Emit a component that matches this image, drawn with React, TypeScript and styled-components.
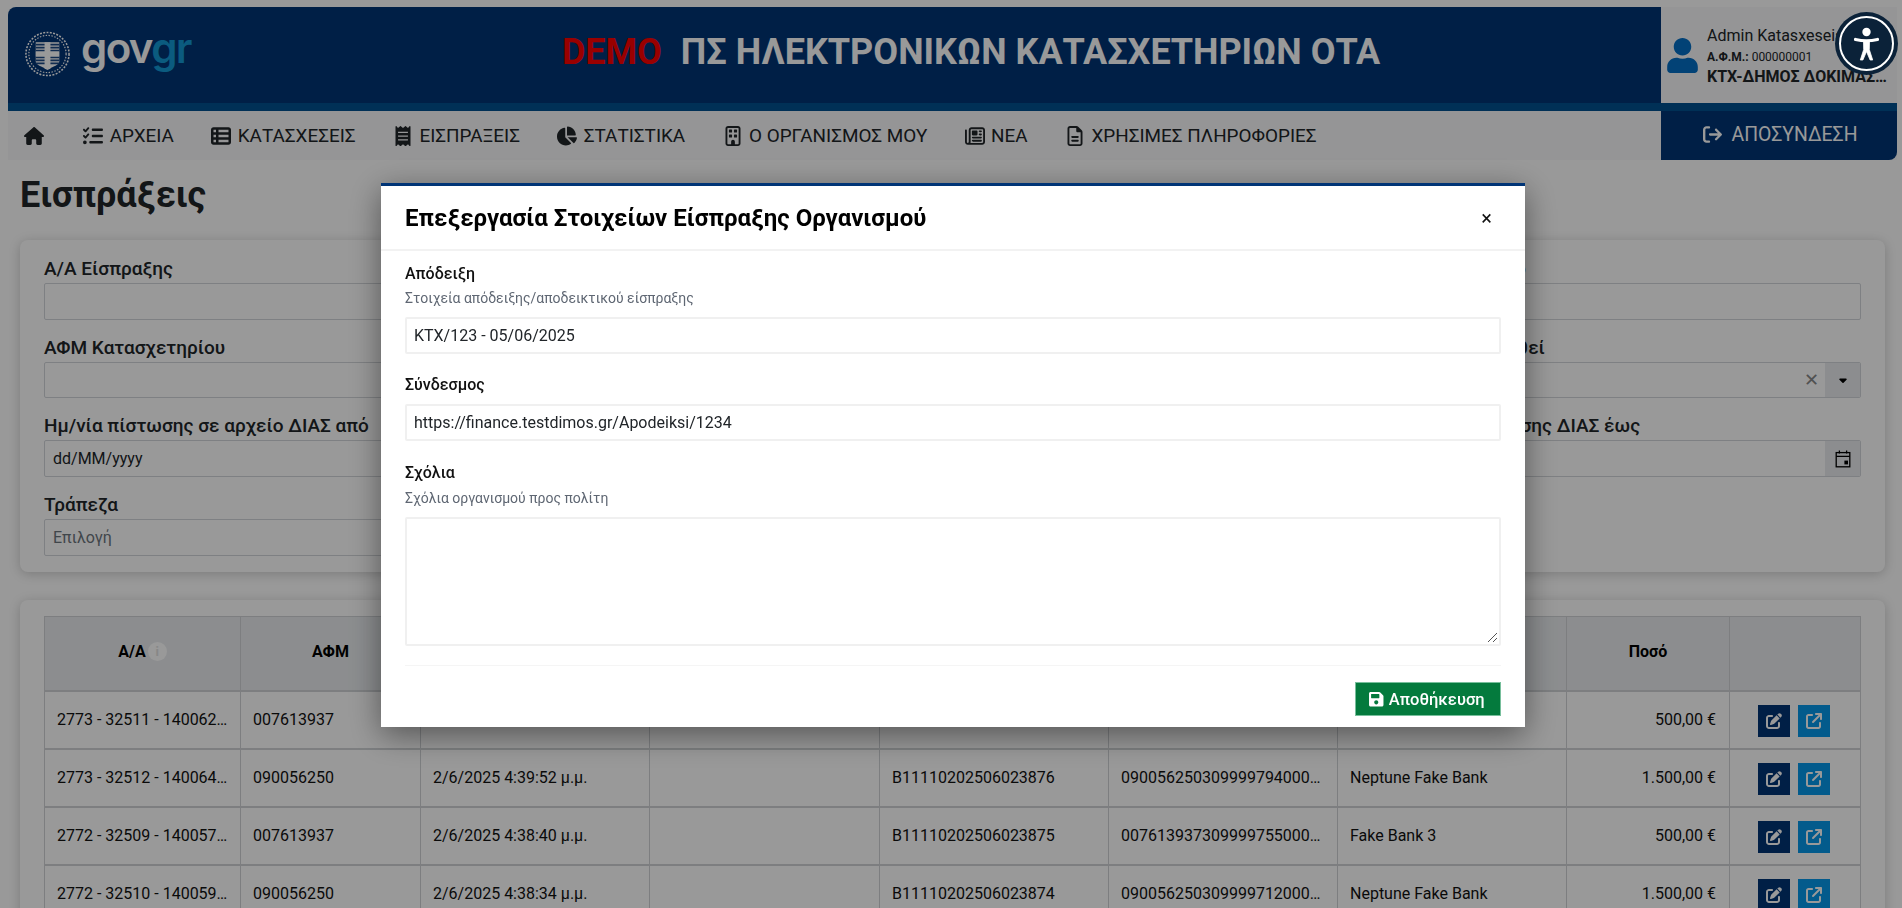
import React from 'react';
import styled, { createGlobalStyle } from 'styled-components';
import { FaSave, FaUser, FaChartPie, FaReceipt } from 'react-icons/fa';
import {
  FaHouse,
  FaListCheck,
  FaTableList,
  FaRegBuilding,
  FaRegNewspaper,
  FaRegFileLines,
  FaArrowRightFromBracket,
  FaCaretDown,
  FaPenToSquare,
  FaArrowUpRightFromSquare,
} from 'react-icons/fa6';

const GlobalStyle = createGlobalStyle`
  * { box-sizing: border-box; }
  html, body { margin: 0; height: 100%; overflow: hidden; background: #fff; }
  body { font-family: Roboto, "Noto Sans", sans-serif; color: #212529; font-size: 16px; }
`;

const Page = styled.div`
  height: 908px;
  overflow: hidden;
  padding: 7px 5px 0 8px;
`;

const TopBar = styled.header`
  display: flex;
  height: 96px;
  background: #003476;
  border-top-left-radius: 8px;
  overflow: hidden;
`;

const Brand = styled.div`
  flex: 1;
  display: flex;
  align-items: center;
`;

const LogoBox = styled.div`
  width: 273px;
  padding: 0 0 2px 16px;
  display: flex;
  align-items: center;
  gap: 10px;
`;

const LogoWord = styled.span`
  font-family: Inter, sans-serif;
  font-weight: 600;
  font-size: 42px;
  line-height: 1;
  letter-spacing: -1.6px;
  color: #fff;
  padding-bottom: 12px;
`;

const LogoAccent = styled.span`
  color: #1398d4;
`;

const SiteTitle = styled.h1`
  flex: 1;
  margin: 0 0 4px;
  text-align: center;
  font-size: 36px;
  line-height: 1.2;
  font-weight: 700;
  color: #fff;
  white-space: nowrap;
`;

const DemoTag = styled.span`
  color: #ff0000;
  margin-right: 19px;
`;

const UserPanel = styled.div`
  width: 236px;
  background: #f8f9fa;
  display: flex;
  align-items: center;
  gap: 7px;
  padding: 2px 4px 0 4px;
`;

const UserIcon = styled(FaUser)`
  font-size: 35px;
  color: #046ec5;
  flex: none;
  margin-top: -2px;
`;

const UserText = styled.div`
  min-width: 0;
  flex: 1;
`;

const UserName = styled.div`
  font-size: 16px;
  line-height: 20px;
  height: 24px;
  white-space: nowrap;
  overflow: hidden;
  text-overflow: ellipsis;
`;

const UserVat = styled.div`
  font-size: 12px;
  line-height: 17px;
  margin-top: -1px;
`;

const UserOrg = styled.div`
  font-size: 16px;
  font-weight: 700;
  line-height: 20px;
  margin-top: 1px;
  white-space: nowrap;
  overflow: hidden;
  text-overflow: ellipsis;
`;

const Stripe = styled.div`
  height: 8px;
  background: #00508f;
`;

const NavBar = styled.nav`
  display: flex;
  height: 49px;
  background: #f8f9fa;
`;

const NavList = styled.div`
  flex: 1;
  display: flex;
  align-items: center;
  padding-left: 16px;
  gap: 37.4px;
`;

const NavItem = styled.a`
  display: flex;
  align-items: center;
  gap: 6.4px;
  font-size: 18.9px;
  color: #212529;
  white-space: nowrap;
  svg { font-size: 20px; flex: none; }
`;

const HomeLink = styled(NavItem)`
  margin-right: 2px;
`;

const LogoutButton = styled.a`
  width: 236px;
  background: #003476;
  color: #fff;
  display: flex;
  align-items: center;
  justify-content: center;
  gap: 9px;
  font-size: 19.4px;
  border-bottom-right-radius: 8px;
  padding: 0 0 2px 3px;
  svg { font-size: 19px; }
`;

const Main = styled.main`
  padding: 0 12px;
`;

const PageTitle = styled.h2`
  margin: 0;
  height: 80px;
  display: flex;
  align-items: center;
  font-size: 36px;
  font-weight: 700;
  line-height: 1;
  padding-bottom: 10px;
  color: #212529;
`;

const Card = styled.section`
  background: #fff;
  border-radius: 8px;
  box-shadow: 0 2px 12px rgba(0, 0, 0, 0.2);
`;

const FilterCard = styled(Card)`
  height: 332px;
  padding: 18px 24px 16px;
  display: grid;
  grid-template-columns: repeat(4, 1fr);
  column-gap: 10px;
  row-gap: 17px;
  align-content: start;
`;

const Field = styled.div``;

const FieldLabel = styled.label`
  display: block;
  font-size: 19px;
  font-weight: 500;
  line-height: 22px;
  margin-bottom: 3px;
  white-space: nowrap;
`;

const InputRow = styled.div`
  display: flex;
  height: 36.67px;
  border: 1px solid #d3d6da;
  border-radius: 2px;
  background: #fff;
  font-size: 16px;
  align-items: center;
  overflow: hidden;
`;

const InputText = styled.span<{ $muted?: boolean }>`
  flex: 1;
  padding: 0 8px;
  color: ${(p) => (p.$muted ? '#6c757d' : '#212529')};
`;

const ClearMark = styled.span`
  color: #888;
  font-size: 18px;
  margin-right: 6px;
  line-height: 1;
`;

const AddOn = styled.span`
  width: 36px;
  align-self: stretch;
  margin: -1px -1px -1px 0;
  background: #e9ecef;
  display: flex;
  align-items: center;
  justify-content: center;
  color: #000;
  font-size: 12px;
`;

const TableCard = styled(Card)`
  margin-top: 28px;
  padding: 16px 24px 24px;
`;

const DataTable = styled.table`
  width: 1817px;
  table-layout: fixed;
  border-collapse: separate;
  border-spacing: 0;
  font-size: 16px;
  border-left: 1px solid #d0d3d6;
  border-top: 1px solid #d0d3d6;
`;

const HeadCell = styled.th`
  height: 75px;
  background: #e9ecef;
  font-weight: 700;
  color: #000;
  text-align: center;
  border-right: 1px solid #d0d3d6;
  border-bottom: 2px solid #d0d3d6;
  padding: 0 12px 4px;
`;

const HeadInner = styled.div`
  display: flex;
  align-items: center;
  justify-content: center;
  gap: 2px;
`;

const InfoBadge = styled.span`
  display: flex;
  width: 19px;
  height: 19px;
  border-radius: 50%;
  background: #fff;
  color: #e2e2e2;
  font-size: 13px;
  align-items: center;
  justify-content: center;
`;

const Cell = styled.td<{ $right?: boolean }>`
  height: 58px;
  padding: 0 ${(p) => (p.$right ? 13 : 12)}px 2px 12px;
  color: #111;
  text-align: ${(p) => (p.$right ? 'right' : 'left')};
  white-space: nowrap;
  overflow: hidden;
  text-overflow: ellipsis;
  border-right: 1px solid #d0d3d6;
  border-bottom: 2px solid #d0d3d6;
`;

const ActionCell = styled(Cell)`
  padding: 2px 0 0 28px;
`;

const Actions = styled.div`
  display: flex;
  gap: 8px;
`;

const ActionButton = styled.button<{ $tone: string }>`
  width: 32px;
  height: 32px;
  padding: 0;
  border: 0;
  background: ${(p) => p.$tone};
  color: #fff;
  display: flex;
  align-items: center;
  justify-content: center;
  font-size: 16px;
`;

const Backdrop = styled.div`
  position: fixed;
  inset: 0;
  background: rgba(0, 0, 0, 0.4);
  padding: 183px 0 0 381px;
`;

const Dialog = styled.div`
  width: 1144px;
  height: 544px;
  background: #fff;
  border-top: 3px solid #003476;
  box-shadow: 0 8px 30px rgba(0, 0, 0, 0.45);
  display: flex;
  flex-direction: column;
`;

const DialogHead = styled.div`
  height: 65px;
  flex: none;
  display: flex;
  align-items: center;
  justify-content: space-between;
  padding: 0 24px;
  border-bottom: 2px solid #f2f2f2;
`;

const DialogTitle = styled.h3`
  margin: 0;
  font-size: 24px;
  font-weight: 700;
  color: #000;
`;

const CloseMark = styled.span`
  font-size: 20px;
  line-height: 1;
  color: #111;
  margin-right: 9px;
`;

const DialogBody = styled.div`
  padding: 13px 24px 0;
`;

const FormLabel = styled.div`
  font-size: 16px;
  font-weight: 500;
  line-height: 20px;
  color: #111;
`;

const FormHint = styled.div`
  font-size: 14px;
  line-height: 18px;
  color: #5f6773;
  margin-top: 5px;
`;

const FormInput = styled.div`
  height: 37px;
  margin: 10px 0 21px;
  border: 2px solid #f0f0f0;
  border-radius: 2px;
  padding: 0 7px;
  display: flex;
  align-items: center;
  font-size: 16px;
  color: #212529;
`;

const LinkInput = styled(FormInput)`
  margin: 9px 0 22px;
`;

const CommentHint = styled(FormHint)`
  margin-top: 6px;
`;

const FormArea = styled.div`
  height: 129px;
  margin-top: 10px;
  border: 2px solid #f0f0f0;
  border-radius: 2px;
  display: flex;
  align-items: flex-end;
  justify-content: flex-end;
  padding: 0 1px 1px 0;
`;

const DialogFoot = styled.div`
  margin: 19px 24px 0;
  padding-top: 16px;
  border-top: 1px solid #f5f5f5;
  display: flex;
  justify-content: flex-end;
`;

const SaveButton = styled.button`
  width: 146px;
  height: 34px;
  background: #047a3d;
  border: 1px solid #78bf9c;
  color: #fff;
  font: 500 16.5px Roboto, sans-serif;
  display: flex;
  align-items: center;
  justify-content: center;
  gap: 4px;
  padding: 0 0 0 1px;
  svg { margin-left: -4px; }
`;

const A11yWidget = styled.div`
  position: fixed;
  top: 12px;
  right: 4px;
  width: 63px;
  height: 63px;
  border-radius: 50%;
  background: #0b2239;
`;

const navItems = [
  { icon: <FaListCheck />, label: 'ΑΡΧΕΙΑ' },
  { icon: <FaTableList />, label: 'ΚΑΤΑΣΧΕΣΕΙΣ' },
  { icon: <FaReceipt />, label: 'ΕΙΣΠΡΑΞΕΙΣ' },
  { icon: <FaChartPie />, label: 'ΣΤΑΤΙΣΤΙΚΑ' },
  { icon: <FaRegBuilding />, label: 'Ο ΟΡΓΑΝΙΣΜΟΣ ΜΟΥ' },
  { icon: <FaRegNewspaper />, label: 'ΝΕΑ' },
  { icon: <FaRegFileLines />, label: 'ΧΡΗΣΙΜΕΣ ΠΛΗΡΟΦΟΡΙΕΣ' },
];

const columns = [196, 180, 229, 230, 229, 229, 229, 163, 131];

const rows = [
  ['2773 - 32511 - 1400620000', '007613937', '2/6/2025 4:40:03', '', 'B11110202506023877', '007613937309999790000123', 'Fake Bank 3', '500,00 €'],
  ['2773 - 32512 - 1400640000', '090056250', '2/6/2025 4:39:52 μ.μ.', '', 'B11110202506023876', '090056250309999794000123', 'Neptune Fake Bank', '1.500,00 €'],
  ['2772 - 32509 - 1400570000', '007613937', '2/6/2025 4:38:40 μ.μ.', '', 'B11110202506023875', '007613937309999755000123', 'Fake Bank 3', '500,00 €'],
  ['2772 - 32510 - 1400590000', '090056250', '2/6/2025 4:38:34 μ.μ.', '', 'B11110202506023874', '090056250309999712000123', 'Neptune Fake Bank', '1.500,00 €'],
];

const Emblem = () => (
  <svg width="47" height="48" viewBox="0 0 48 48" fill="none">
    <circle cx="24" cy="24" r="22" stroke="#fff" strokeWidth="1.6" strokeDasharray="2 1.4" />
    <circle cx="24" cy="24" r="19" stroke="#fff" strokeWidth="1.2" strokeDasharray="1.5 1.5" />
    <path d="M12 12h24v20c0 3-6 5-12 8-6-3-12-5-12-8z" fill="#fff" />
    <path
      d="M12 14.500h24M12 17.500h24M12 20.500h24M12 27.500h24M12 30.500h24M12 33.500h24"
      stroke="#1d4a85"
      strokeWidth="1.8"
    />
    <path d="M21 12h6v27l-3 1-3-1zM12 21.500h24v5H12z" fill="#fff" />
  </svg>
);

const CalendarIcon = () => (
  <svg width="16" height="18" viewBox="0 0 16 18" fill="none" stroke="#000" strokeWidth="1.3">
    <rect x="1.2" y="2.6" width="13.6" height="14.2" />
    <path d="M1.2 6.4h13.6M4.4 0.6v3M11.6 0.6v3" />
    <rect x="9.4" y="10.6" width="3.6" height="3.8" fill="#000" stroke="none" />
  </svg>
);

const A11yIcon = () => (
  <svg width="63" height="63" viewBox="0 0 63 63" fill="none">
    <circle cx="31.5" cy="31.5" r="26.5" stroke="#fff" strokeWidth="2" />
    <circle cx="31.5" cy="20" r="4.2" fill="#fff" />
    <path d="M20.5 27.5c7 1.6 15 1.6 22 0" stroke="#fff" strokeWidth="3.2" strokeLinecap="round" />
    <path d="M28.5 28.5h6l-.2 9 3.4 10.500h-2.600L31.500 39.500 27.900 48h-2.600l3.400-10.500z" fill="#fff" stroke="#fff" strokeWidth="0.8" strokeLinejoin="round" />
  </svg>
);

const ResizeGrip = () => (
  <svg width="11" height="11" viewBox="0 0 11 11" stroke="#555" strokeWidth="1">
    <path d="M10 1 1 10M10 6 6 10" />
  </svg>
);

const App: React.FC = () => {
  return (
    <>
      <GlobalStyle />
      <Page>
        <TopBar>
          <Brand>
            <LogoBox>
              <Emblem />
              <LogoWord>
                gov<LogoAccent>gr</LogoAccent>
              </LogoWord>
            </LogoBox>
            <SiteTitle>
              <DemoTag>DEMO</DemoTag>ΠΣ ΗΛΕΚΤΡΟΝΙΚΩΝ ΚΑΤΑΣΧΕΤΗΡΙΩΝ ΟΤΑ
            </SiteTitle>
          </Brand>
          <UserPanel>
            <UserIcon />
            <UserText>
              <UserName>Admin Katasxeseis</UserName>
              <UserVat>
                <b>Α.Φ.Μ.:</b> 000000001
              </UserVat>
              <UserOrg>ΚΤΧ-ΔΗΜΟΣ ΔΟΚΙΜΑΣΤΙΚΟΣ</UserOrg>
            </UserText>
          </UserPanel>
        </TopBar>
        <Stripe />
        <NavBar>
          <NavList>
            <HomeLink>
              <FaHouse />
            </HomeLink>
            {navItems.map((item) => (
              <NavItem key={item.label}>
                {item.icon}
                {item.label}
              </NavItem>
            ))}
          </NavList>
          <LogoutButton>
            <FaArrowRightFromBracket />
            ΑΠΟΣΥΝΔΕΣΗ
          </LogoutButton>
        </NavBar>
        <Main>
          <PageTitle>Εισπράξεις</PageTitle>
          <FilterCard>
            <Field>
              <FieldLabel>Α/Α Είσπραξης</FieldLabel>
              <InputRow />
            </Field>
            <Field>
              <FieldLabel>Α/Α Αρχείου</FieldLabel>
              <InputRow />
            </Field>
            <Field>
              <FieldLabel>Αριθμός RF</FieldLabel>
              <InputRow />
            </Field>
            <Field>
              <FieldLabel>Αριθ. Αρχείο</FieldLabel>
              <InputRow />
            </Field>
            <Field>
              <FieldLabel>ΑΦΜ Κατασχετηρίου</FieldLabel>
              <InputRow />
            </Field>
            <Field>
              <FieldLabel>ΑΦΜ Οφειλέτη</FieldLabel>
              <InputRow />
            </Field>
            <Field>
              <FieldLabel>Αρ. Κατασχετηρίου</FieldLabel>
              <InputRow />
            </Field>
            <Field>
              <FieldLabel>Έχει πληρωθεί</FieldLabel>
              <InputRow>
                <InputText />
                <ClearMark>✕</ClearMark>
                <AddOn>
                  <FaCaretDown />
                </AddOn>
              </InputRow>
            </Field>
            <Field>
              <FieldLabel>Ημ/νία πίστωσης σε αρχείο ΔΙΑΣ από</FieldLabel>
              <InputRow>
                <InputText>dd/MM/yyyy</InputText>
              </InputRow>
            </Field>
            <Field>
              <FieldLabel>Ημ/νία πίστωσης σε αρχείο ΔΙΑΣ έως</FieldLabel>
              <InputRow>
                <InputText>dd/MM/yyyy</InputText>
              </InputRow>
            </Field>
            <Field>
              <FieldLabel>Ημ/νία έκδοσης ΔΙΑΣ από</FieldLabel>
              <InputRow>
                <InputText>dd/MM/yyyy</InputText>
              </InputRow>
            </Field>
            <Field>
              <FieldLabel>Ημ/νία έκδοσης ΔΙΑΣ έως</FieldLabel>
              <InputRow>
                <InputText>dd/MM/yyyy</InputText>
                <AddOn>
                  <CalendarIcon />
                </AddOn>
              </InputRow>
            </Field>
            <Field>
              <FieldLabel>Τράπεζα</FieldLabel>
              <InputRow>
                <InputText $muted>Επιλογή</InputText>
              </InputRow>
            </Field>
          </FilterCard>
          <TableCard>
            <DataTable>
              <colgroup>
                {columns.map((w, i) => (
                  <col key={i} style={{ width: w }} />
                ))}
              </colgroup>
              <thead>
                <tr>
                  <HeadCell>
                    <HeadInner>
                      Α/Α
                      <InfoBadge>i</InfoBadge>
                    </HeadInner>
                  </HeadCell>
                  <HeadCell>ΑΦΜ</HeadCell>
                  <HeadCell>Ημ/νία πίστωσης</HeadCell>
                  <HeadCell>Ημ/νία πληρωμής</HeadCell>
                  <HeadCell>Αρ. ΔΙΑΣ</HeadCell>
                  <HeadCell>Κωδικός RF</HeadCell>
                  <HeadCell>Τράπεζα</HeadCell>
                  <HeadCell>Ποσό</HeadCell>
                  <HeadCell />
                </tr>
              </thead>
              <tbody>
                {rows.map((row) => (
                  <tr key={row[0]}>
                    {row.map((value, i) => (
                      <Cell key={i} $right={i === 7}>
                        {value}
                      </Cell>
                    ))}
                    <ActionCell>
                      <Actions>
                        <ActionButton $tone="#003476">
                          <FaPenToSquare />
                        </ActionButton>
                        <ActionButton $tone="#0598ea">
                          <FaArrowUpRightFromSquare />
                        </ActionButton>
                      </Actions>
                    </ActionCell>
                  </tr>
                ))}
              </tbody>
            </DataTable>
          </TableCard>
        </Main>
      </Page>
      <Backdrop>
        <Dialog>
          <DialogHead>
            <DialogTitle>Επεξεργασία Στοιχείων Είσπραξης Οργανισμού</DialogTitle>
            <CloseMark>×</CloseMark>
          </DialogHead>
          <DialogBody>
            <FormLabel>Απόδειξη</FormLabel>
            <FormHint>Στοιχεία απόδειξης/αποδεικτικού είσπραξης</FormHint>
            <FormInput>ΚΤΧ/123 - 05/06/2025</FormInput>
            <FormLabel>Σύνδεσμος</FormLabel>
            <LinkInput>https://finance.testdimos.gr/Apodeiksi/1234</LinkInput>
            <FormLabel>Σχόλια</FormLabel>
            <CommentHint>Σχόλια οργανισμού προς πολίτη</CommentHint>
            <FormArea>
              <ResizeGrip />
            </FormArea>
          </DialogBody>
          <DialogFoot>
            <SaveButton>
              <FaSave />
              Αποθήκευση
            </SaveButton>
          </DialogFoot>
        </Dialog>
      </Backdrop>
      <A11yWidget>
        <A11yIcon />
      </A11yWidget>
    </>
  );
};

export default App;
